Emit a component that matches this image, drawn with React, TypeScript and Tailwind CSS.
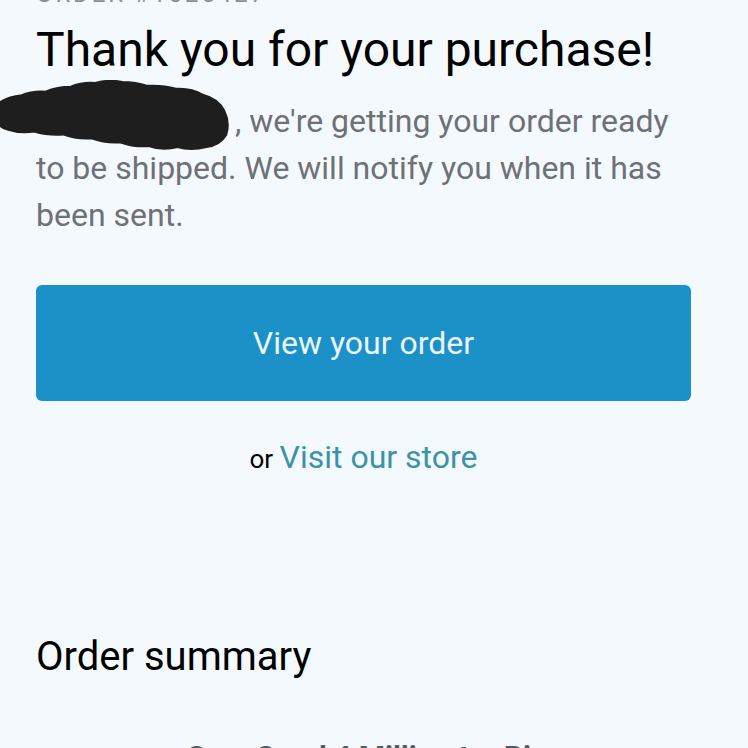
export default function App() {
  return (
    <div className="relative h-[748px] overflow-hidden bg-[#f4f9fe] font-['Roboto',sans-serif]">
      <div className="pl-[36px] pr-[57px]">
        <p className="-mt-[18px] text-[24px] leading-[24px] tracking-[0.12em] uppercase text-[#8a8f94]">
          Order #1025427
        </p>
        <h1 className="mt-[16px] text-[48px] leading-[56px] text-black">Thank you for your purchase!</h1>
        <p className="mt-[20px] text-[32px] leading-[47px] text-[#6e7175]">
          <span className="inline-block w-[199px]" />, we're getting your order ready to be shipped. We will notify you
          when it has been sent.
        </p>
        <a
          href="#"
          className="mt-[46px] flex h-[116px] items-center justify-center rounded-[6px] bg-[#1b91c7] text-[32px] text-[#eaf6fb]"
        >
          View your order
        </a>
        <p className="mt-[36px] text-center leading-[40px]">
          <span className="text-[26px] text-black">or </span>
          <a href="#" className="text-[32px] text-[#3b93a6]">
            Visit our store
          </a>
        </p>
        <h2 className="mt-[150px] text-[40px] leading-[48px] text-black">Order summary</h2>
        <div className="mt-[56px] pl-[150px] text-[30px] leading-[40px] font-bold whitespace-nowrap text-[#555a60]">
          Gray Good 4 Millimeter Ring
        </div>
      </div>
      {/* redacted name */}
      <svg
        className="absolute left-0 top-[80px]"
        width="233"
        height="72"
        viewBox="0 0 244 74"
        preserveAspectRatio="none"
      >
        <path
          d="M0 24 Q10 18 22 17 Q34 12 48 13 Q60 8 74 8 Q86 3 100 4 Q114 0 128 3 Q142 3 154 7 Q170 6 184 10 Q200 9 212 16 Q228 20 234 32 Q240 44 236 56 Q230 66 216 68 Q200 72 186 68 Q170 72 156 67 Q140 68 126 63 Q110 64 96 59 Q80 60 66 55 Q50 56 36 52 Q20 54 8 50 Q0 48 0 44 Z"
          fill="#1e1e1e"
          stroke="#1e1e1e"
          strokeWidth="4"
          strokeLinejoin="round"
        />
      </svg>
    </div>
  )
}
